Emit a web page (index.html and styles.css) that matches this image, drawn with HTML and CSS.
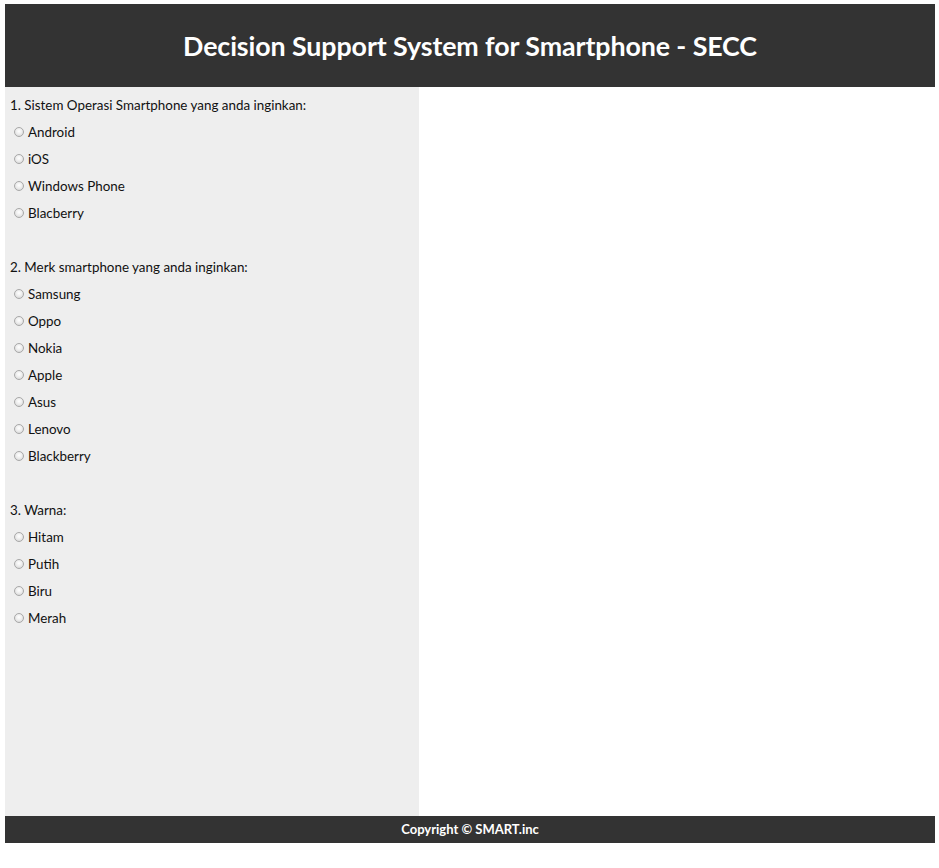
FILE: index.html
```html
<!DOCTYPE html>
<html>
<head>
<meta charset="utf-8">
<title>Decision Support System for Smartphone - SECC</title>
<link rel="stylesheet" href="styles.css">
</head>
<body>
<div class="page">
  <header class="header">
    <h1 class="title">Decision Support System for Smartphone - SECC</h1>
  </header>
  <div class="main">
    <aside class="sidebar">
      <form class="form">
        <div class="question">1. Sistem Operasi Smartphone yang anda inginkan:</div>
        <label class="option"><input class="radio" type="radio" name="os"><span>Android</span></label>
        <label class="option"><input class="radio" type="radio" name="os"><span>iOS</span></label>
        <label class="option"><input class="radio" type="radio" name="os"><span>Windows Phone</span></label>
        <label class="option"><input class="radio" type="radio" name="os"><span>Blacberry</span></label>
        <div class="spacer"></div>
        <div class="question">2. Merk smartphone yang anda inginkan:</div>
        <label class="option"><input class="radio" type="radio" name="merk"><span>Samsung</span></label>
        <label class="option"><input class="radio" type="radio" name="merk"><span>Oppo</span></label>
        <label class="option"><input class="radio" type="radio" name="merk"><span>Nokia</span></label>
        <label class="option"><input class="radio" type="radio" name="merk"><span>Apple</span></label>
        <label class="option"><input class="radio" type="radio" name="merk"><span>Asus</span></label>
        <label class="option"><input class="radio" type="radio" name="merk"><span>Lenovo</span></label>
        <label class="option"><input class="radio" type="radio" name="merk"><span>Blackberry</span></label>
        <div class="spacer"></div>
        <div class="question">3. Warna:</div>
        <label class="option"><input class="radio" type="radio" name="warna"><span>Hitam</span></label>
        <label class="option"><input class="radio" type="radio" name="warna"><span>Putih</span></label>
        <label class="option"><input class="radio" type="radio" name="warna"><span>Biru</span></label>
        <label class="option"><input class="radio" type="radio" name="warna"><span>Merah</span></label>
      </form>
    </aside>
    <section class="content"></section>
  </div>
  <footer class="footer">Copyright &copy; SMART.inc</footer>
</div>
</body>
</html>
```

FILE: styles.css
```css
html, body {
  margin: 0;
  padding: 0;
  background: #ffffff;
}
body {
  font-family: "Lato", "Open Sans", sans-serif;
  color: #111;
}
.page {
  width: 930px;
  margin: 4px 0 0 5px;
}
.header {
  background: #333333;
  height: 83px;
  display: flex;
  align-items: center;
  justify-content: center;
}
.title {
  margin: 0;
  color: #ffffff;
  font-size: 26.8px;
  font-weight: 700;
  letter-spacing: -0.1px;
}
.main {
  display: flex;
  height: 729px;
}
.sidebar {
  width: 409px;
  background: #eeeeee;
  padding: 5px 0 0 5px;
  font-size: 13.4px;
}
.content {
  flex: 1;
  background: #ffffff;
}
.form {
  display: flex;
  flex-direction: column;
}
.question {
  line-height: 27px;
  height: 27px;
}
.option {
  display: flex;
  align-items: center;
  height: 27px;
  line-height: 27px;
}
.spacer {
  height: 27px;
}
.radio {
  appearance: none;
  -webkit-appearance: none;
  width: 10px;
  height: 10px;
  margin: 0 4px 0 4px;
  border-radius: 50%;
  border: 1px solid #a8a8a8;
  background: radial-gradient(circle at 50% 40%, #ffffff 0%, #eeeeee 45%, #cfcfcf 100%);
  box-sizing: border-box;
  position: relative;
  top: -1px;
}
.footer {
  background: #333333;
  color: #ffffff;
  height: 27px;
  line-height: 27px;
  text-align: center;
  font-size: 13px;
  font-weight: 700;
}
```
